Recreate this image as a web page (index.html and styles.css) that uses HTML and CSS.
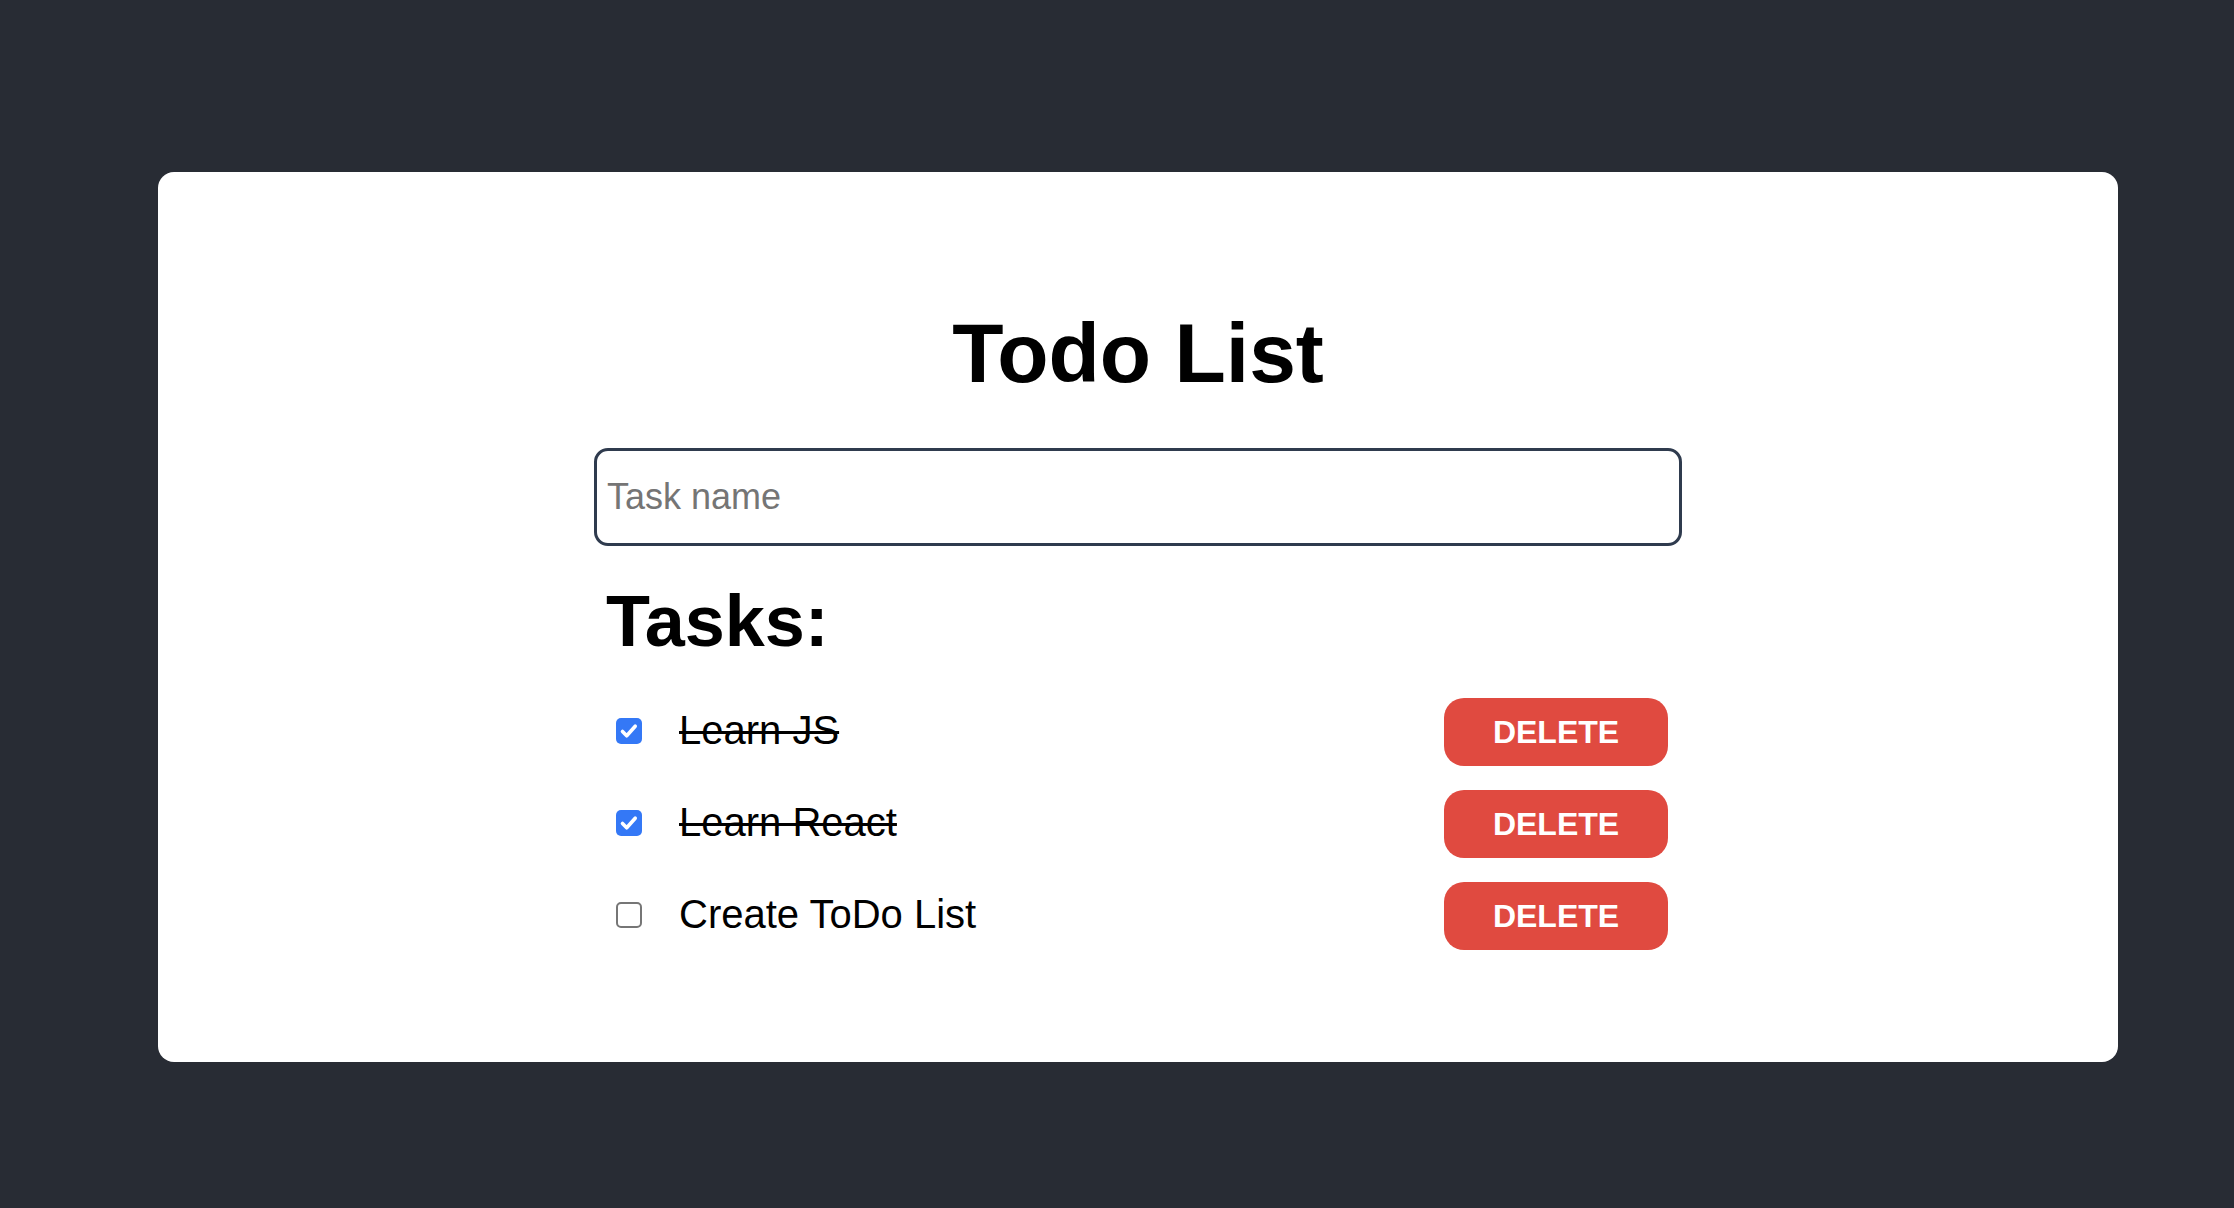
FILE: index.html
```html
<!DOCTYPE html>
<html lang="en">
<head>
<meta charset="utf-8">
<title>Todo List</title>
<link rel="stylesheet" href="styles.css">
</head>
<body>
<main class="card">
  <div class="content">
    <h1 class="title">Todo List</h1>
    <input class="task-input" type="text" placeholder="Task name">
    <h2 class="tasks-heading">Tasks:</h2>
    <ul class="task-list">
      <li class="task">
        <span class="check checked"><svg viewBox="0 0 26 26" width="26" height="26"><path d="M6.5 13.5l4.2 4.3 8.5-9.6" fill="none" stroke="#fff" stroke-width="3.6" stroke-linecap="round" stroke-linejoin="round"/></svg></span>
        <span class="task-name done">Learn JS</span>
        <button class="delete">DELETE</button>
      </li>
      <li class="task">
        <span class="check checked"><svg viewBox="0 0 26 26" width="26" height="26"><path d="M6.5 13.5l4.2 4.3 8.5-9.6" fill="none" stroke="#fff" stroke-width="3.6" stroke-linecap="round" stroke-linejoin="round"/></svg></span>
        <span class="task-name done">Learn React</span>
        <button class="delete">DELETE</button>
      </li>
      <li class="task">
        <span class="check"></span>
        <span class="task-name">Create ToDo List</span>
        <button class="delete">DELETE</button>
      </li>
    </ul>
  </div>
</main>
</body>
</html>
```
FILE: styles.css
```css
html, body {
  margin: 0;
  padding: 0;
  background: #282c34;
}
body {
  font-family: "Liberation Sans", Arial, Helvetica, sans-serif;
  color: #000;
  padding: 172px 116px 0 158px;
  height: 1208px;
  box-sizing: border-box;
}
.card {
  background: #fff;
  border-radius: 16px;
  height: 890px;
  display: flex;
  justify-content: center;
}
.content {
  width: 1088px;
  padding-top: 133px;
  display: flex;
  flex-direction: column;
}
.title {
  margin: 0;
  font-size: 84px;
  line-height: 96px;
  font-weight: 700;
  text-align: center;
}
.task-input {
  margin: 47px 0 0;
  height: 98px;
  box-sizing: border-box;
  border: 3px solid #2f3b4e;
  border-radius: 14px;
  padding: 0 10px;
  font-family: "Liberation Sans", Arial, sans-serif;
  font-size: 36px;
  color: #000;
  outline: none;
}
.task-input::placeholder {
  color: #757575;
}
.tasks-heading {
  margin: 33px 0 0;
  padding-left: 12px;
  font-size: 72px;
  line-height: 84px;
  font-weight: 700;
}
.task-list {
  list-style: none;
  margin: 35px 0 0;
  padding: 0 14px 0 22px;
  display: flex;
  flex-direction: column;
  gap: 24px;
}
.task {
  display: flex;
  align-items: center;
  height: 68px;
}
.check {
  width: 26px;
  height: 26px;
  box-sizing: border-box;
  border: 2px solid #767676;
  border-radius: 5px;
  flex: none;
  display: flex;
  align-items: center;
  justify-content: center;
  margin-top: -3px;
}
.check.checked {
  border: none;
  background: #3478f6;
}
.check svg {
  display: block;
}
.task-name {
  margin-left: 37px;
  margin-top: -4px;
  font-size: 40px;
  line-height: 48px;
  flex: 1;
}
.task-name.done {
  text-decoration: line-through;
  text-decoration-thickness: 3px;
}
.delete {
  width: 224px;
  height: 68px;
  border: none;
  border-radius: 20px;
  background: #e04a40;
  color: #fff;
  font-family: "Liberation Sans", Arial, sans-serif;
  font-weight: 700;
  font-size: 32px;
  padding: 0;
  cursor: pointer;
}
```
